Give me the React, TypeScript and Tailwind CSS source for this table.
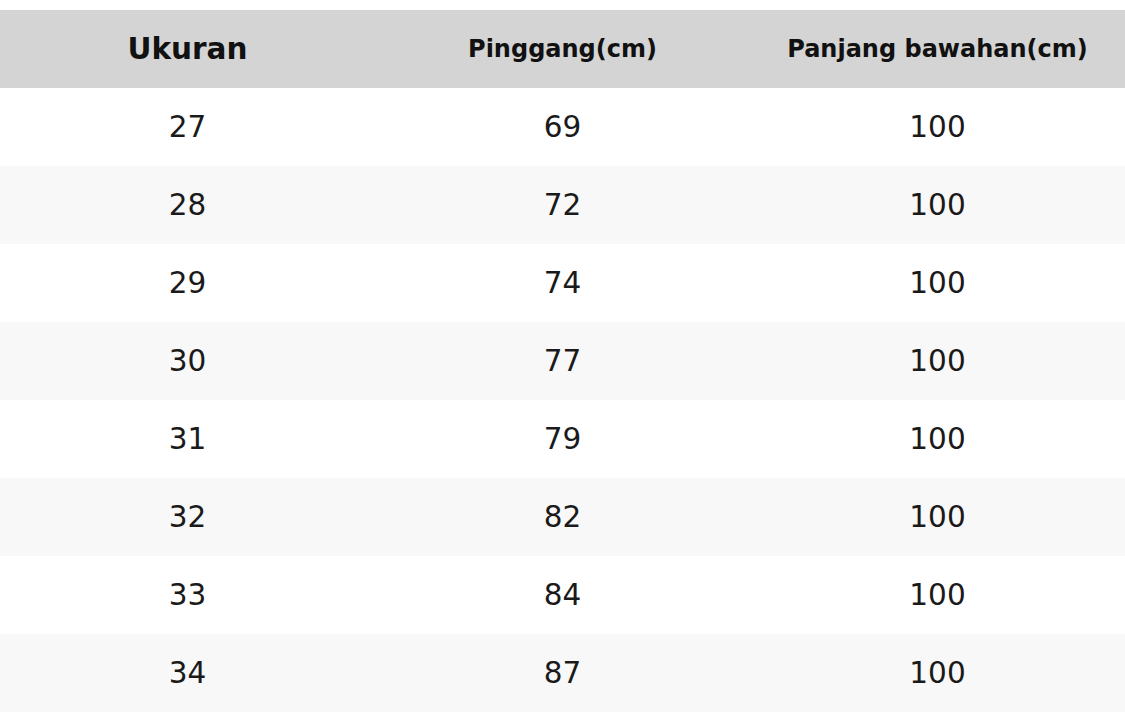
import React from "react";

const rows = [
  ["27", "69", "100"],
  ["28", "72", "100"],
  ["29", "74", "100"],
  ["30", "77", "100"],
  ["31", "79", "100"],
  ["32", "82", "100"],
  ["33", "84", "100"],
  ["34", "87", "100"],
];

export default function App() {
  return (
    <div
      className="w-[1125px] h-[712px] bg-white pt-[10px] overflow-hidden"
      style={{ fontFamily: '"DejaVu Sans", Verdana, sans-serif' }}
    >
      <div className="grid grid-cols-3 h-[78px] bg-[#d4d4d4] items-center text-[#111]">
        <div className="text-center font-bold text-[29.5px]">Ukuran</div>
        <div className="text-center font-bold text-[24px]">Pinggang(cm)</div>
        <div className="text-center font-bold text-[24px]">Panjang bawahan(cm)</div>
      </div>
      {rows.map((r, i) => (
        <div
          key={i}
          className={
            "grid grid-cols-3 h-[78px] items-center text-[29.5px] text-[#1a1a1a] " +
            (i % 2 === 1 ? "bg-[#f8f8f8]" : "bg-white")
          }
        >
          {r.map((c, j) => (
            <div key={j} className="text-center">
              {c}
            </div>
          ))}
        </div>
      ))}
    </div>
  );
}
